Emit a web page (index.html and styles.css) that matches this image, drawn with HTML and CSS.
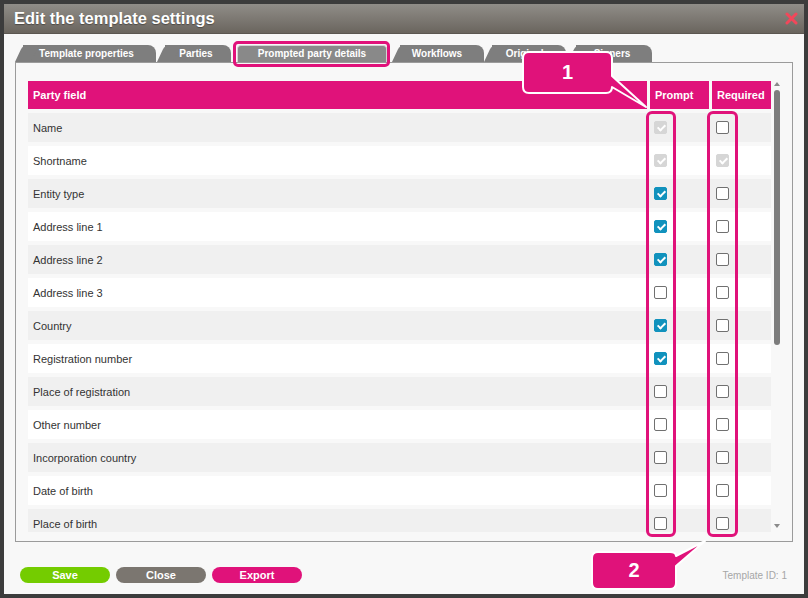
FILE: index.html
```html
<!DOCTYPE html>
<html>
<head>
<meta charset="utf-8">
<link rel="stylesheet" href="styles.css">
</head>
<body>
<div class="modal">
  <div class="titlebar">
    <span class="title">Edit the template settings</span>
    <svg class="close" width="13" height="13" viewBox="0 0 13 13"><path d="M2 2 L11 11 M11 2 L2 11" stroke="#f2475a" stroke-width="3" stroke-linecap="round"/></svg>
  </div>
  <div class="tabs">
    <div class="tab t1">Template properties</div>
    <div class="tab t2">Parties</div>
    <div class="tab active">Prompted party details</div>
    <div class="tab t4">Workflows</div>
    <div class="tab t5">Originals</div>
    <div class="tab t6">Signers</div>
  </div>
  <div class="panel">
    <div class="tablewrap">
      <div class="row head">
        <div class="hc">Party field</div>
        <div class="hc">Prompt</div>
        <div class="hc">Required</div>
      </div>
      <div class="row alt"><div class="cell">Name</div><div class="cbc"><span class="cb dis"></span></div><div class="cbc"><span class="cb"></span></div></div>
      <div class="row"><div class="cell">Shortname</div><div class="cbc"><span class="cb dis"></span></div><div class="cbc"><span class="cb dis"></span></div></div>
      <div class="row alt"><div class="cell">Entity type</div><div class="cbc"><span class="cb on"></span></div><div class="cbc"><span class="cb"></span></div></div>
      <div class="row"><div class="cell">Address line 1</div><div class="cbc"><span class="cb on"></span></div><div class="cbc"><span class="cb"></span></div></div>
      <div class="row alt"><div class="cell">Address line 2</div><div class="cbc"><span class="cb on"></span></div><div class="cbc"><span class="cb"></span></div></div>
      <div class="row"><div class="cell">Address line 3</div><div class="cbc"><span class="cb"></span></div><div class="cbc"><span class="cb"></span></div></div>
      <div class="row alt"><div class="cell">Country</div><div class="cbc"><span class="cb on"></span></div><div class="cbc"><span class="cb"></span></div></div>
      <div class="row"><div class="cell">Registration number</div><div class="cbc"><span class="cb on"></span></div><div class="cbc"><span class="cb"></span></div></div>
      <div class="row alt"><div class="cell">Place of registration</div><div class="cbc"><span class="cb"></span></div><div class="cbc"><span class="cb"></span></div></div>
      <div class="row"><div class="cell">Other number</div><div class="cbc"><span class="cb"></span></div><div class="cbc"><span class="cb"></span></div></div>
      <div class="row alt"><div class="cell">Incorporation country</div><div class="cbc"><span class="cb"></span></div><div class="cbc"><span class="cb"></span></div></div>
      <div class="row"><div class="cell">Date of birth</div><div class="cbc"><span class="cb"></span></div><div class="cbc"><span class="cb"></span></div></div>
      <div class="row alt"><div class="cell">Place of birth</div><div class="cbc"><span class="cb"></span></div><div class="cbc"><span class="cb"></span></div></div>
    </div>
    <div class="scrollbar">
      <span class="arrow-up"></span>
      <span class="thumb"></span>
      <span class="arrow-down"></span>
    </div>
  </div>
  <div class="footer">
    <div class="btn save">Save</div>
    <div class="btn close-btn">Close</div>
    <div class="btn export">Export</div>
    <div class="tid">Template ID: 1</div>
  </div>
</div>

<div class="hl hl-tab"></div>
<div class="hl hl-prompt"></div>
<div class="hl hl-required"></div>

<svg class="callouts" width="808" height="598" viewBox="0 0 808 598">
  <path d="M529,52 H606 Q612,52 612,58 V76 L646,107 L612,87 Q612,93 606,93 H529 Q523,93 523,87 V58 Q523,52 529,52 Z" fill="#e0127a" stroke="#fff" stroke-width="2" stroke-linejoin="round"/>
  <path d="M598,552 H670 Q676,552 676,556 L705,541 L676,566 V583 Q676,589 670,589 H598 Q592,589 592,583 V558 Q592,552 598,552 Z" fill="#e0127a" stroke="#fff" stroke-width="2" stroke-linejoin="round"/>
</svg>
<div class="num num1">1</div>
<div class="num num2">2</div>
</body>
</html>
```

FILE: styles.css
```css
html, body {
  margin: 0;
}
body {
  padding: 4px;
  width: 808px;
  height: 598px;
  box-sizing: border-box;
  background: #3c3c3c;
  position: relative;
  overflow: hidden;
  font-family: "Liberation Sans", Arial, sans-serif;
}
.modal {
  width: 800px;
  height: 590px;
  background: #f8f8f8;
}
.titlebar {
  height: 30px;
  box-sizing: border-box;
  background: linear-gradient(#908d88, #6a655e);
  border-bottom: 1px solid #5c5751;
  display: flex;
  align-items: center;
  justify-content: space-between;
  padding: 0 6px 0 10px;
}
.title {
  color: #fff;
  font-weight: bold;
  font-size: 16.5px;
  text-shadow: 0 1px 1px rgba(0,0,0,0.35);
}
.tabs {
  display: flex;
  align-items: flex-end;
  height: 17px;
  margin: 11px 0 0 11px;
}
.tab {
  position: relative;
  z-index: 0;
  height: 17px;
  line-height: 17px;
  box-sizing: border-box;
  background: #7e7e7e;
  color: #fff;
  font-weight: bold;
  font-size: 10px;
  text-align: center;
  border-top-right-radius: 8px;
  white-space: nowrap;
}
.tab::before {
  content: "";
  position: absolute;
  z-index: -1;
  top: 0;
  bottom: 0;
  left: -8px;
  width: 16px;
  background: #7e7e7e;
  border-top-left-radius: 5px;
  transform: skewX(-25deg);
  transform-origin: 0 100%;
}
.t1 { margin-left: 8px; width: 133px; padding-right: 6px; }
.t2 { margin-left: 9px; width: 66px; padding-right: 4px; }
.active {
  margin-left: 6px;
  width: 150px;
  background: #898989;
  border: 1px solid #d4d4d4;
  border-bottom: none;
  border-radius: 4px 4px 0 0;
  line-height: 16px;
}
.active::before { display: none; }
.t4 { margin-left: 13px; width: 84px; padding-right: 10px; }
.t5 { margin-left: 8px; width: 74px; padding-right: 3px; }
.t6 { margin-left: 10px; width: 76px; padding-right: 4px; }

.panel {
  margin-left: 11px;
  width: 778px;
  height: 480px;
  box-sizing: border-box;
  border: 1px solid #9b9b9b;
  background: #f8f8f8;
  padding: 18px 0 0 12px;
  display: flex;
  align-items: flex-start;
}
.tablewrap {
  width: 743px;
  height: 451px;
  overflow: hidden;
  display: flex;
  flex-direction: column;
  gap: 4px;
}
.row {
  flex: none;
  display: grid;
  grid-template-columns: 619px 59px 59px;
  column-gap: 3px;
  height: 29px;
  align-items: center;
  font-size: 11px;
  color: #333;
  background: #fff;
}
.row.alt { background: #f0f0f0; }
.row.head {
  height: 28px;
  background: transparent;
  align-items: stretch;
}
.hc {
  background: #e0127a;
  color: #fff;
  font-weight: bold;
  display: flex;
  align-items: center;
  padding-left: 5px;
}
.cell { padding-left: 5px; }
.cbc {
  padding-left: 4px;
  display: flex;
  align-items: center;
}
.cb {
  display: block;
  width: 13px;
  height: 13px;
  box-sizing: border-box;
  border: 1px solid #707070;
  border-radius: 2px;
  background: #fff;
  position: relative;
}
.cb.on { background: #1192bd; border-color: #1192bd; }
.cb.dis { background: #d6d6d6; border-color: #d6d6d6; }
.cb.on::after, .cb.dis::after {
  content: "";
  position: absolute;
  left: 3.5px;
  top: 1px;
  width: 3px;
  height: 6px;
  border: solid #fff;
  border-width: 0 2px 2px 0;
  transform: rotate(45deg);
}
.scrollbar {
  width: 11px;
  height: 451px;
  box-sizing: border-box;
  padding: 1px 0 4px;
  display: flex;
  flex-direction: column;
  align-items: center;
}
.arrow-up {
  width: 0;
  height: 0;
  border-left: 3.5px solid transparent;
  border-right: 3.5px solid transparent;
  border-bottom: 4px solid #8a8a8a;
}
.thumb {
  margin-top: 4px;
  width: 6px;
  height: 255px;
  border-radius: 3px;
  background: #7d7d7d;
}
.arrow-down {
  margin-top: auto;
  width: 0;
  height: 0;
  border-left: 3.5px solid transparent;
  border-right: 3.5px solid transparent;
  border-top: 4px solid #8a8a8a;
}
.footer {
  display: flex;
  align-items: center;
  gap: 6px;
  margin-top: 25px;
  padding: 0 17px 0 16px;
}
.btn {
  width: 90px;
  height: 16px;
  line-height: 16px;
  border-radius: 8px;
  color: #fff;
  font-weight: bold;
  font-size: 11px;
  text-align: center;
}
.save { background: #74cc00; }
.close-btn { background: #7b7670; }
.export { background: #e0127a; }
.tid {
  margin-left: auto;
  font-size: 10px;
  color: #a6a6a6;
}

.hl {
  position: absolute;
  border: 3px solid #e0127a;
  border-radius: 6px;
  box-sizing: border-box;
}
.hl-tab { left: 233px; top: 41px; width: 157px; height: 26px; border-radius: 5px; }
.hl-prompt { left: 646px; top: 111px; width: 30px; height: 426px; }
.hl-required { left: 707px; top: 111px; width: 31px; height: 426px; }

.callouts {
  position: absolute;
  left: 0;
  top: 0;
}
.num {
  position: absolute;
  display: flex;
  align-items: center;
  justify-content: center;
  color: #fff;
  font-weight: bold;
  font-size: 20px;
}
.num1 { left: 523px; top: 52px; width: 89px; height: 41px; }
.num2 { left: 592px; top: 552px; width: 84px; height: 37px; }
```
